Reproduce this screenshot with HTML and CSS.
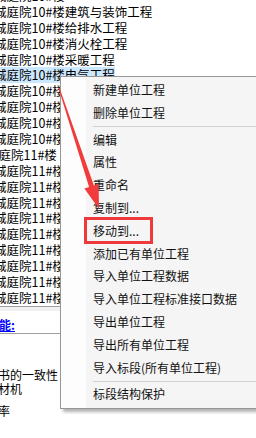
FILE: index.html
```html
<!DOCTYPE HTML>
<html>
	<head>
		<meta charset="utf-8">
		<link rel="stylesheet" href="styles.css">
	</head>
	<body>
		<div class="tree">
			<div class="row"><span>城庭院10#楼</span></div>
			<div class="row"><span>城庭院10#楼建筑与装饰工程</span></div>
			<div class="row"><span>城庭院10#楼给排水工程</span></div>
			<div class="row"><span>城庭院10#楼消火栓工程</span></div>
			<div class="row"><span>城庭院10#楼采暖工程</span></div>
			<div class="row sel"><span>城庭院10#楼电气工程</span></div>
			<div class="row"><span>城庭院10#楼智能化工程</span></div>
			<div class="row"><span>城庭院10#楼通风工程</span></div>
			<div class="row"><span>城庭院10#楼燃气工程</span></div>
			<div class="row"><span>城庭院10#楼室外工程</span></div>
			<div class="row parent"><span>城庭院11#楼</span></div>
			<div class="row"><span>城庭院11#楼建筑与装饰工程</span></div>
			<div class="row"><span>城庭院11#楼给排水工程</span></div>
			<div class="row"><span>城庭院11#楼消火栓工程</span></div>
			<div class="row"><span>城庭院11#楼采暖工程</span></div>
			<div class="row"><span>城庭院11#楼电气工程</span></div>
			<div class="row"><span>城庭院11#楼智能化工程</span></div>
			<div class="row"><span>城庭院11#楼通风工程</span></div>
			<div class="row"><span>城庭院11#楼燃气工程</span></div>
			<div class="row"><span>城庭院11#楼室外工程</span></div>
		</div>
		<div class="scroll"></div>
		<div class="info">
			<a class="title" href="#">能:</a>
			<div class="rule"></div>
			<ul class="checks">
				<li>书的一致性</li>
				<li>材机</li>
				<li class="last">率</li>
			</ul>
		</div>

		<div class="menu">
			<div class="item">新建单位工程</div>
			<div class="item">删除单位工程</div>
			<div class="sep"></div>
			<div class="item">编辑</div>
			<div class="item">属性</div>
			<div class="item">重命名</div>
			<div class="item">复制到...</div>
			<div class="item">移动到...</div>
			<div class="item">添加已有单位工程</div>
			<div class="item">导入单位工程数据</div>
			<div class="item">导入单位工程标准接口数据</div>
			<div class="item">导出单位工程</div>
			<div class="item">导出所有单位工程</div>
			<div class="item">导入标段(所有单位工程)</div>
			<div class="sep"></div>
			<div class="item">标段结构保护</div>
		</div>

		<div class="mark"></div>
		<svg class="arrow" width="256" height="438" viewBox="0 0 256 438">
			<polygon points="59.5,87.8 93.9,185.4 98.6,183.8 99,209 84.4,188.6 89.1,187 58.5,88.2" fill="#f23c3c"/>
		</svg>
	</body>
</html>
```

FILE: styles.css
```css
body {
	margin: 0;
	width: 256px;
	height: 438px;
	overflow: hidden;
	position: relative;
	background: #ffffff;
	font-family: "Noto Sans CJK SC", "Noto Sans", sans-serif;
	color: #000000;
}

.tree {
	margin-top: -12px;
	border-bottom: 1px solid #a0a0a0;
	font-size: 12.5px;
}

.tree .row {
	height: 15.9px;
	line-height: 15.9px;
	white-space: nowrap;
	margin-left: -6px;
}

.tree .row.parent {
	margin-left: -14px;
}

.tree .row.sel span {
	background: #cce8ff;
	display: inline-block;
	height: 15.9px;
}

.scroll {
	height: 4px;
	background: #f0f0f0;
}

.info {
	font-size: 12px;
}

.info .title {
	display: block;
	margin-top: 6px;
	margin-left: -1px;
	line-height: 16px;
	color: #0000ff;
	font-weight: bold;
	text-decoration: underline;
}

.info .rule {
	margin-top: 0;
	height: 1px;
	background: #a0a0a0;
}

.checks {
	list-style: none;
	margin: 34px 0 0 0;
	padding: 0;
}

.checks li {
	line-height: 14px;
	margin-left: -2px;
}

.checks li.last {
	margin-top: 8px;
}

.menu {
	position: absolute;
	left: 60px;
	top: 76px;
	width: 210px;
	padding: 2px 0;
	border: 1px solid #979797;
	background: linear-gradient(to right, #fdfdfd 25px, #f5f5f5 25px);
	box-shadow: 3px 3px 3px rgba(0, 0, 0, 0.3);
	font-size: 12px;
	color: #111111;
}

.menu .item {
	height: 22.8px;
	line-height: 22.8px;
	padding-left: 32px;
	white-space: nowrap;
}

.menu .sep {
	margin: 1.5px 0 1.5px 32px;
	height: 1px;
	background: #d2d2d2;
}

.mark {
	position: absolute;
	left: 84px;
	top: 217px;
	width: 63px;
	height: 21px;
	border: 3px solid #ee3a3a;
}

.arrow {
	position: absolute;
	left: 0;
	top: 0;
	pointer-events: none;
}
```
